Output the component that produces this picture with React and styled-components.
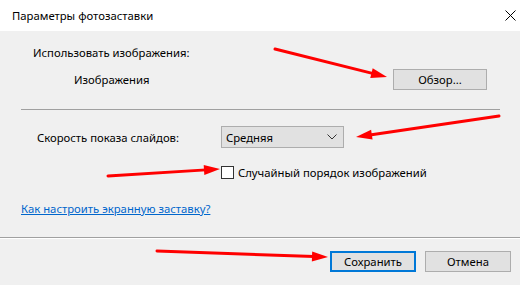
import React from "react";
import styled, { createGlobalStyle } from "styled-components";

const Global = createGlobalStyle`
  html, body { margin: 0; padding: 0; background: #f0f0f0; }
  body { font-family: "Segoe UI", "Noto Sans", "Liberation Sans", sans-serif; font-size: 11.3px; color: #000; }
  * { box-sizing: border-box; }
`;

const Window = styled.div`
  position: relative;
  width: 520px;
  height: 285px;
  display: flex;
  flex-direction: column;
  background: #f0f0f0;
  overflow: hidden;
`;

const TitleBar = styled.div`
  height: 31px;
  flex: none;
  background: #fff;
  display: flex;
  align-items: center;
  justify-content: space-between;
  padding: 0 4px 0 12px;
`;

const Close = styled.svg`
  width: 11px;
  height: 11px;
`;

const Content = styled.div`
  display: flex;
  flex-direction: column;
  padding: 0 20px 0 21px;
`;

const Label = styled.div`
  height: 16px;
  line-height: 16px;
  margin-top: ${(p) => p.$mt || 0}px;
  padding-left: ${(p) => p.$pl || 0}px;
  white-space: nowrap;
`;

const Row = styled.div`
  display: flex;
  align-items: center;
  height: ${(p) => p.$h}px;
  margin-top: ${(p) => p.$mt}px;
`;

const Cell = styled.div`
  width: ${(p) => p.$w}px;
  padding-left: ${(p) => p.$pl || 0}px;
  flex: none;
  white-space: nowrap;
`;

const Button = styled.div`
  width: ${(p) => p.$w}px;
  height: 21px;
  background: #e1e1e1;
  border: ${(p) => (p.$default ? "2px solid #0078d7" : "1px solid #adadad")};
  display: flex;
  align-items: center;
  justify-content: center;
  flex: none;
`;

const Sep = styled.div`
  height: 1px;
  background: #a0a0a0;
  margin-top: ${(p) => p.$mt}px;
  box-shadow: ${(p) => (p.$white ? "0 1px 0 #fff" : "none")};
`;

const Select = styled.div`
  width: 123px;
  height: 22px;
  background: #e1e1e1;
  border: 1px solid #adadad;
  display: flex;
  align-items: center;
  justify-content: space-between;
  padding: 0 6px 0 4px;
`;

const Check = styled.div`
  width: 13px;
  height: 13px;
  border: 1px solid #333;
  background: #fff;
  margin-right: 4px;
  flex: none;
`;

const Link = styled.a`
  display: block;
  height: 16px;
  line-height: 16px;
  margin-top: 22px;
  color: #0066cc;
  text-decoration: underline;
  white-space: nowrap;
`;

const Footer = styled.div`
  display: flex;
  justify-content: flex-end;
  gap: 9px;
  padding: 13px 9px 0 0;
`;

const Overlay = styled.svg`
  position: absolute;
  left: 0;
  top: 0;
  width: 520px;
  height: 285px;
  pointer-events: none;
`;

function Arrow({ x1, y1, x2, y2 }) {
  const dx = x2 - x1;
  const dy = y2 - y1;
  const len = Math.hypot(dx, dy);
  const ux = dx / len;
  const uy = dy / len;
  const hl = 16;
  const hw = 5;
  const bx = x2 - ux * hl;
  const by = y2 - uy * hl;
  const pts = `${x2},${y2} ${bx - uy * hw},${by + ux * hw} ${bx + uy * hw},${by - ux * hw}`;
  return (
    <g>
      <line x1={x1} y1={y1} x2={bx + ux * 2} y2={by + uy * 2} stroke="#f00" strokeWidth="3" strokeLinecap="round" />
      <polygon points={pts} fill="#f00" />
    </g>
  );
}

export default function App() {
  return (
    <>
      <Global />
      <Window>
        <TitleBar>
          <span>Параметры фотозаставки</span>
          <Close viewBox="0 0 11 11">
            <path d="M0.5 0.5 L10.5 10.5 M10.5 0.5 L0.5 10.5" stroke="#000" strokeWidth="1" fill="none" />
          </Close>
        </TitleBar>
        <Content>
          <Label $mt={14} $pl={12}>Использовать изображения:</Label>
          <Row $h={21} $mt={8}>
            <Cell $w={372} $pl={53}>Изображения</Cell>
            <Button $w={94}>Обзор...</Button>
          </Row>
          <Sep $mt={19} />
          <Row $h={22} $mt={16}>
            <Cell $w={200} $pl={16}>Скорость показа слайдов:</Cell>
            <Select>
              <span>Средняя</span>
              <svg width="10" height="6" viewBox="0 0 10 6">
                <path d="M0.5 0.5 L5 5 L9.5 0.5" stroke="#333" strokeWidth="1" fill="none" />
              </svg>
            </Select>
          </Row>
          <Row $h={14} $mt={17}>
            <Cell $w={200} />
            <Check />
            <span>Случайный порядок изображений</span>
          </Row>
          <Link href="#">Как настроить экранную заставку?</Link>
        </Content>
        <Sep $mt={20} $white />
        <Footer>
          <Button $w={86} $default>Сохранить</Button>
          <Button $w={86}>Отмена</Button>
        </Footer>
        <Overlay viewBox="0 0 520 285">
          <Arrow x1={275} y1={49} x2={387} y2={77} />
          <Arrow x1={499} y1={116} x2={356} y2={137} />
          <Arrow x1={108} y1={176} x2={220} y2={169} />
          <Arrow x1={157} y1={251} x2={328} y2={257} />
        </Overlay>
      </Window>
    </>
  );
}
